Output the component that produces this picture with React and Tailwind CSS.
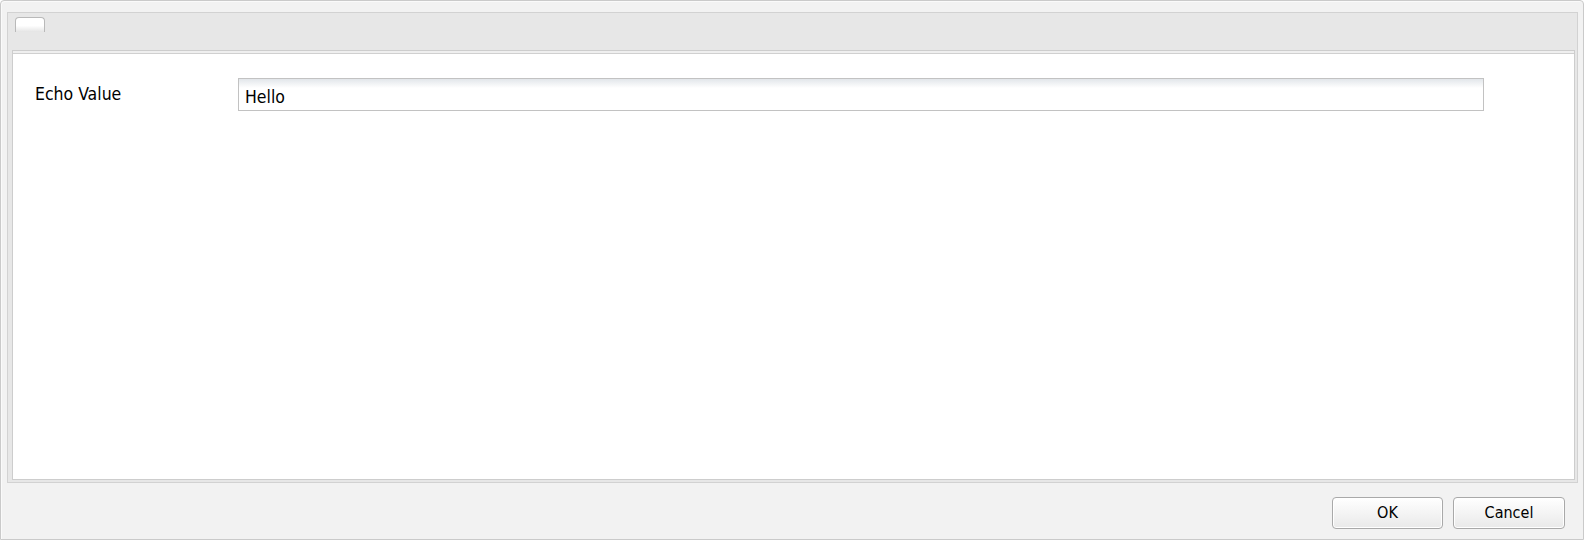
export default function App() {
  const font = { fontFamily: '"DejaVu Sans Condensed", "DejaVu Sans", "Liberation Sans", sans-serif' };
  return (
    <div className="w-[1586px] h-[545px] bg-white" style={font}>
      <div className="w-[1584px] h-[540px] border border-[#cacaca] rounded-t-[4px] bg-[#f2f2f2] flex flex-col shadow-[inset_1px_1px_0_#fafafa]">
        {/* tab panel */}
        <div className="ml-[6px] mr-[5px] mt-[11px] h-[471px] border border-[#d2d2d2] bg-[#e7e7e7] flex flex-col">
          {/* tab strip */}
          <div className="h-[37px] pl-[7px] pt-[4px] flex items-start">
            <div className="w-[30px] h-[15px] rounded-t-[4px] border-x border-t border-[#b9b9b9] bg-[linear-gradient(to_bottom,#ffffff,#ffffff_55%,#e4e4e4)]" />
          </div>
          {/* body */}
          <div className="ml-[4px] mr-[2px] mb-[2px] flex-1 border border-[#cdcdcd] bg-white flex flex-col">
            <div className="h-[3px] bg-[#efefef] border-b border-[#d0d0d0]" />
            <div className="pl-[22px] pt-[24px] flex items-start">
              <div className="w-[203px] mt-[6px] text-[17.5px] leading-[20px] text-black">Echo Value</div>
              <div className="w-[1246px] h-[33px] border border-[#c2c2c2] bg-[linear-gradient(to_bottom,#e2e6ea,#ffffff_9px)] pl-[6px] pt-[8px] text-[17.5px] leading-[20px] text-black">
                Hello
              </div>
            </div>
          </div>
        </div>
        {/* footer */}
        <div className="flex-1 flex justify-end items-start pt-[14px] pr-[18px] gap-[10px]">
          <button className="w-[111px] h-[32px] rounded-[4px] border border-[#a9a9a9] bg-[linear-gradient(to_bottom,#ffffff,#f4f4f4_50%,#e9e9e9)] text-[16px] leading-[20px] text-black flex items-center justify-center shadow-[inset_0_0_0_1px_#ffffff]">
            OK
          </button>
          <button className="w-[112px] h-[32px] rounded-[4px] border border-[#a9a9a9] bg-[linear-gradient(to_bottom,#ffffff,#f4f4f4_50%,#e9e9e9)] text-[16px] leading-[20px] text-black flex items-center justify-center shadow-[inset_0_0_0_1px_#ffffff]">
            Cancel
          </button>
        </div>
      </div>
    </div>
  );
}
